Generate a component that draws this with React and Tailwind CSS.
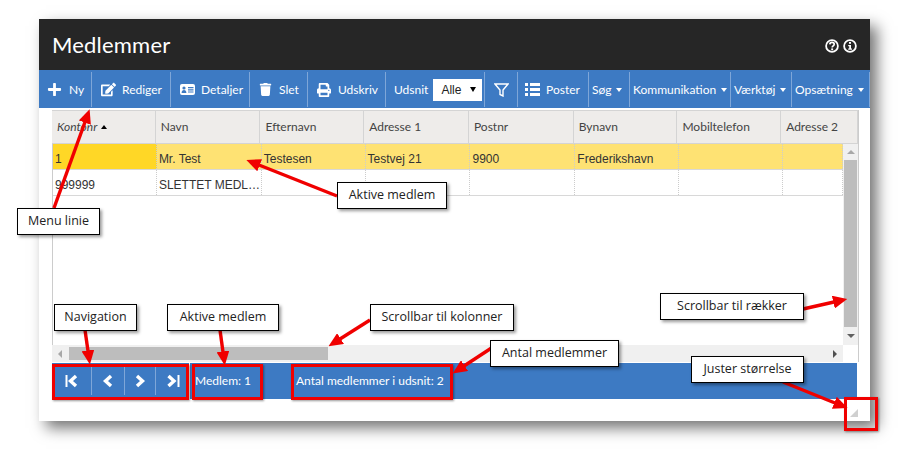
import React from 'react';
import { FaPlus, FaEdit, FaTrash, FaPrint } from 'react-icons/fa';

const IdCardIcon = () => (
  <svg width="15" height="11" viewBox="0 0 15 11" fill="white">
    <rect x="0" y="0" width="15" height="11" rx="2" />
    <circle cx="4" cy="4" r="1.6" fill="#3d7ac3" />
    <path d="M1.6 9c0-2 1-3 2.4-3s2.4 1 2.4 3z" fill="#3d7ac3" />
    <path d="M8 3h5.5v1.2H8zM8 5.2h5.5v1.2H8zM8 7.4h5.5v1.2H8z" fill="#3d7ac3" />
  </svg>
);

const FunnelIcon = () => (
  <svg width="15" height="14" viewBox="0 0 15 14" fill="none" stroke="white" strokeWidth="1.4">
    <path d="M1 1h13L9 7v6L6 11.5V7z" />
  </svg>
);

const ListIcon = () => (
  <svg width="15" height="13" viewBox="0 0 15 13" fill="white">
    <path d="M0 0h3v3H0zM5 0h10v3H5zM0 5h3v3H0zM5 5h10v3H5zM0 10h3v3H0zM5 10h10v3H5z" />
  </svg>
);

const QuestionIcon = () => (
  <svg width="14" height="14" viewBox="0 0 14 14" fill="none">
    <circle cx="7" cy="7" r="5.9" stroke="white" strokeWidth="1.8" />
    <path d="M4.8 5.4C4.9 4 5.8 3.4 7 3.4c1.3 0 2.2.7 2.2 1.9 0 1.6-2 1.6-2 3.2" stroke="white" strokeWidth="1.7" />
    <rect x="6.2" y="9.4" width="1.9" height="1.8" fill="white" />
  </svg>
);

const InfoIcon = () => (
  <svg width="14" height="14" viewBox="0 0 14 14" fill="none">
    <circle cx="7" cy="7" r="5.9" stroke="white" strokeWidth="1.8" />
    <rect x="6" y="3" width="2" height="1.8" fill="white" />
    <path d="M5.2 6h2.8v3.6h1v1.2H5.2V9.6h1V7.2h-1z" fill="white" />
  </svg>
);

// heavy nav chevrons, dir -1 = left, 1 = right, bar = stop line at the end
const NavIcon = ({ dir, bar }) => (
  <svg width="14" height="14" viewBox="0 0 14 14" fill="none" stroke="white">
    {dir < 0 ? (
      <path d={bar ? 'M11 2L5.5 7l5.5 5' : 'M10 2L4.5 7l5.5 5'} strokeWidth="3.4" />
    ) : (
      <path d={bar ? 'M2.5 2L8 7l-5.5 5' : 'M4 2L9.5 7 4 12'} strokeWidth="3.4" />
    )}
    {bar && dir < 0 && <path d="M1.5 1v12" strokeWidth="2" />}
    {bar && dir > 0 && <path d="M12.5 1v12" strokeWidth="2" />}
  </svg>
);

const Caret = () => <span className="ml-[5px] inline-block border-x-[3px] border-t-[4px] border-x-transparent border-t-white" />;

const toolbarItems = [
  { label: 'Ny', width: 'w-[53px]', icon: <FaPlus size={15} color="white" />, gap: 'gap-[7px]', pad: 'pl-[8px]' },
  { label: 'Rediger', width: 'w-[79px]', icon: <FaEdit size={15} color="white" />, gap: 'gap-[6px]', pad: 'pl-[9px]' },
  { label: 'Detaljer', width: 'w-[79px]', icon: <IdCardIcon />, gap: 'gap-[6px]', pad: 'pl-[9px]' },
  { label: 'Slet', width: 'w-[58px]', icon: <FaTrash size={13} color="white" />, gap: 'gap-[7px]', pad: 'pl-[9px]' },
  { label: 'Udskriv', width: 'w-[78px]', icon: <FaPrint size={14} color="white" />, gap: 'gap-[7px]', pad: 'pl-[9px]' },
];

const menuItems = [
  { label: 'Søg', width: 'w-[41px]' },
  { label: 'Kommunikation', width: 'w-[101px]' },
  { label: 'Værktøj', width: 'w-[61px]' },
  { label: 'Opsætning', width: 'w-[78px]' },
];

const columns = [
  { label: 'Kontonr', width: 'w-[104px]' },
  { label: 'Navn', width: 'w-[105px]' },
  { label: 'Efternavn', width: 'w-[104px]' },
  { label: 'Adresse 1', width: 'w-[105px]' },
  { label: 'Postnr', width: 'w-[105px]' },
  { label: 'Bynavn', width: 'w-[104px]' },
  { label: 'Mobiltelefon', width: 'w-[104px]' },
  { label: 'Adresse 2', width: 'w-[77px]' },
];

const bodyColumns = ['w-[104px]', 'w-[105px]', 'w-[104px]', 'w-[105px]', 'w-[105px]', 'w-[104px]', 'w-[104px]', 'w-[60px]'];

const rows = [
  ['1', 'Mr. Test', 'Testesen', 'Testvej 21', '9900', 'Frederikshavn', '', ''],
  ['999999', 'SLETTET MEDL…', '', '', '', '', '', ''],
];

const notes = [
  { label: 'Menu linie', pos: 'left-[17px] top-[208px] w-[83px]' },
  { label: 'Aktive medlem', pos: 'left-[337px] top-[182px] w-[110px]' },
  { label: 'Navigation', pos: 'left-[54px] top-[304px] w-[83px]' },
  { label: 'Aktive medlem', pos: 'left-[167px] top-[304px] w-[112px]' },
  { label: 'Scrollbar til kolonner', pos: 'left-[370px] top-[304px] w-[144px]' },
  { label: 'Antal medlemmer', pos: 'left-[490px] top-[340px] w-[129px]' },
  { label: 'Scrollbar til rækker', pos: 'left-[660px] top-[293px] w-[144px]' },
  { label: 'Juster størrelse', pos: 'left-[691px] top-[356px] w-[113px]' },
];

const arrows = [
  [54, 208, 85, 122],
  [337, 196, 259, 165],
  [85, 330, 88, 351],
  [220, 330, 223, 352],
  [370, 320, 340, 339],
  [493, 347, 464, 366],
  [803, 309, 834, 302],
  [783, 382, 835, 403],
];

export default function App() {
  return (
    <div className="relative h-[456px] w-[904px] overflow-hidden bg-white pl-[39px] pt-[19px] font-['Lato',sans-serif]">
      <div className="flex h-[402px] w-[831px] flex-col bg-white shadow-[7px_7px_14px_rgba(0,0,0,0.55)]">
        <div className="flex h-[52px] items-center justify-between bg-[#262626] pl-[13px] pr-[13px]">
          <span className="text-[22px] tracking-[0.2px] text-white">Medlemmer</span>
          <div className="flex gap-[4px] pt-[2px]">
            <QuestionIcon />
            <InfoIcon />
          </div>
        </div>

        <div className="flex h-[38px] items-end bg-[#3d7ac3] pb-[1px] text-[12px] text-white">
          {toolbarItems.map((item) => (
            <div key={item.label} className={`flex h-[35px] items-center border-r border-[#7ea6d8] ${item.width} ${item.gap} ${item.pad}`}>
              {item.icon}
              <span>{item.label}</span>
            </div>
          ))}
          <div className="flex h-[35px] w-[99px] items-center gap-[5px] border-r border-[#7ea6d8] pl-[8px]">
            <span>Udsnit</span>
            <div className="flex h-[22px] w-[49px] items-center justify-between bg-white pl-[8px] pr-[6px] text-[#222]">
              <span className="font-['Liberation_Sans',sans-serif] text-[12px]">Alle</span>
              <span className="border-x-[3.5px] border-t-[5px] border-x-transparent border-t-black" />
            </div>
          </div>
          <div className="flex h-[35px] w-[33px] items-center justify-center border-r border-[#7ea6d8]">
            <FunnelIcon />
          </div>
          <div className="flex h-[35px] w-[71px] items-center gap-[6px] border-r border-[#7ea6d8] pl-[7px]">
            <ListIcon />
            <span>Poster</span>
          </div>
          {menuItems.map((item) => (
            <div key={item.label} className={`flex h-[35px] items-center border-r border-[#7ea6d8] pl-[3px] ${item.width}`}>
              <span>{item.label}</span>
              <Caret />
            </div>
          ))}
        </div>

        <div className="px-[13px] pt-[2px]">
          <div className="w-[807px] border-r border-[#ccc]">
            <div className="flex h-[34px] border-b border-t border-[#d4d4d4] bg-[#eeecea] text-[12px] text-[#444]">
              {columns.map((col, i) => (
                <div key={col.label} className={`flex items-center border-r border-[#d4d4d4] pl-[5px] ${col.width} ${i === 0 ? 'italic' : ''}`}>
                  {col.label}
                  {i === 0 && <span className="ml-[4px] border-x-[3px] border-b-[4px] border-x-transparent border-b-black" />}
                </div>
              ))}
            </div>

            <div className="flex h-[201px]">
              <div className="w-[791px] border-l border-[#ccc]">
                {rows.map((row, r) => (
                  <div key={row[0]} className={`flex h-[26px] border-b border-[#d8d8d8] font-['Liberation_Sans',sans-serif] text-[12px] text-[#333] ${r === 0 ? 'bg-[#fee273]' : 'bg-white'}`}>
                    {row.map((cell, c) => (
                      <div
                        key={c}
                        className={`flex items-center border-r border-dotted border-[#ccc] pl-[2px] pt-[5px] ${bodyColumns[c]} ${r === 0 && c === 0 ? 'bg-[#ffd726]' : ''}`}
                      >
                        <span>{cell}</span>
                      </div>
                    ))}
                  </div>
                ))}
              </div>
              <div className="flex w-[15px] flex-col items-center bg-[#f0f0f0]">
                <span className="mt-[6px] border-x-[4px] border-b-[4px] border-x-transparent border-b-[#a8a8a8]" />
                <div className="mt-[6px] h-[167px] w-[13px] bg-[#bdbdbd]" />
                <span className="mt-[7px] border-x-[4px] border-t-[4px] border-x-transparent border-t-[#606060]" />
              </div>
            </div>

            <div className="flex h-[17px]">
              <div className="flex w-[791px] items-center bg-[#f0f0f0]">
                <span className="ml-[6px] border-y-[4px] border-r-[4px] border-y-transparent border-r-[#a8a8a8]" />
                <div className="ml-[7px] h-[13px] w-[259px] bg-[#bdbdbd]" />
                <span className="ml-auto mr-[6px] border-y-[4px] border-l-[4px] border-y-transparent border-l-[#505050]" />
              </div>
            </div>
          </div>

          <div className="mt-[1px] flex h-[36px] w-[805px] items-center bg-[#3d7ac3] text-[12px] text-white">
            <div className="flex h-full w-[138px] items-center border-r border-white">
              <div className="flex h-[28px] w-[40px] items-center justify-center border-r border-[#7ea6d8] pl-[1px]">
                <NavIcon dir={-1} bar />
              </div>
              <div className="flex h-[28px] w-[33px] items-center justify-center border-r border-[#7ea6d8]">
                <NavIcon dir={-1} />
              </div>
              <div className="flex h-[28px] w-[31px] items-center justify-center border-r border-[#7ea6d8]">
                <NavIcon dir={1} />
              </div>
              <div className="flex h-[28px] w-[33px] items-center justify-center">
                <NavIcon dir={1} bar />
              </div>
            </div>
            <span className="ml-[5px] w-[101px]">Medlem: 1</span>
            <span>Antal medlemmer i udsnit: 2</span>
          </div>

          <div className="relative h-[22px]">
            <svg className="absolute bottom-[4px] right-[-1px]" width="8" height="8" viewBox="0 0 8 8">
              <path d="M0 8L8 0v8z" fill="#d0d0d0" />
            </svg>
          </div>
        </div>
      </div>

      <span className="absolute left-[52px] top-[364px] h-[36px] w-[137px] border-[3px] border-[#f00000] shadow-[1px_1px_2px_rgba(0,0,0,0.4)]" />
      <span className="absolute left-[192px] top-[364px] h-[36px] w-[71px] border-[3px] border-[#f00000] shadow-[1px_1px_2px_rgba(0,0,0,0.4)]" />
      <span className="absolute left-[291px] top-[364px] h-[36px] w-[162px] border-[3px] border-[#f00000] shadow-[1px_1px_2px_rgba(0,0,0,0.4)]" />
      <span className="absolute left-[844px] top-[397px] h-[34px] w-[34px] border-[3px] border-[#f00000] shadow-[1px_1px_2px_rgba(0,0,0,0.4)]" />

      <svg className="absolute left-0 top-0" width="904" height="456" viewBox="0 0 904 456">
        <defs>
          <marker id="head" markerWidth="4.2" markerHeight="3.8" refX="0.2" refY="1.9" orient="auto">
            <path d="M0 0L4.2 1.9L0 3.8z" fill="#f00000" />
          </marker>
        </defs>
        {arrows.map(([x1, y1, x2, y2]) => (
          <line key={`${x1}-${y1}`} x1={x1} y1={y1} x2={x2} y2={y2} stroke="#f00000" strokeWidth="3.4" markerEnd="url(#head)" />
        ))}
      </svg>

      {notes.map((note) => (
        <div
          key={note.pos}
          className={`absolute flex h-[27px] items-center justify-center border border-black bg-white font-['Open_Sans',sans-serif] text-[12.5px] text-[#222] shadow-[2px_2px_3px_rgba(0,0,0,0.4)] ${note.pos}`}
        >
          {note.label}
        </div>
      ))}
    </div>
  );
}
